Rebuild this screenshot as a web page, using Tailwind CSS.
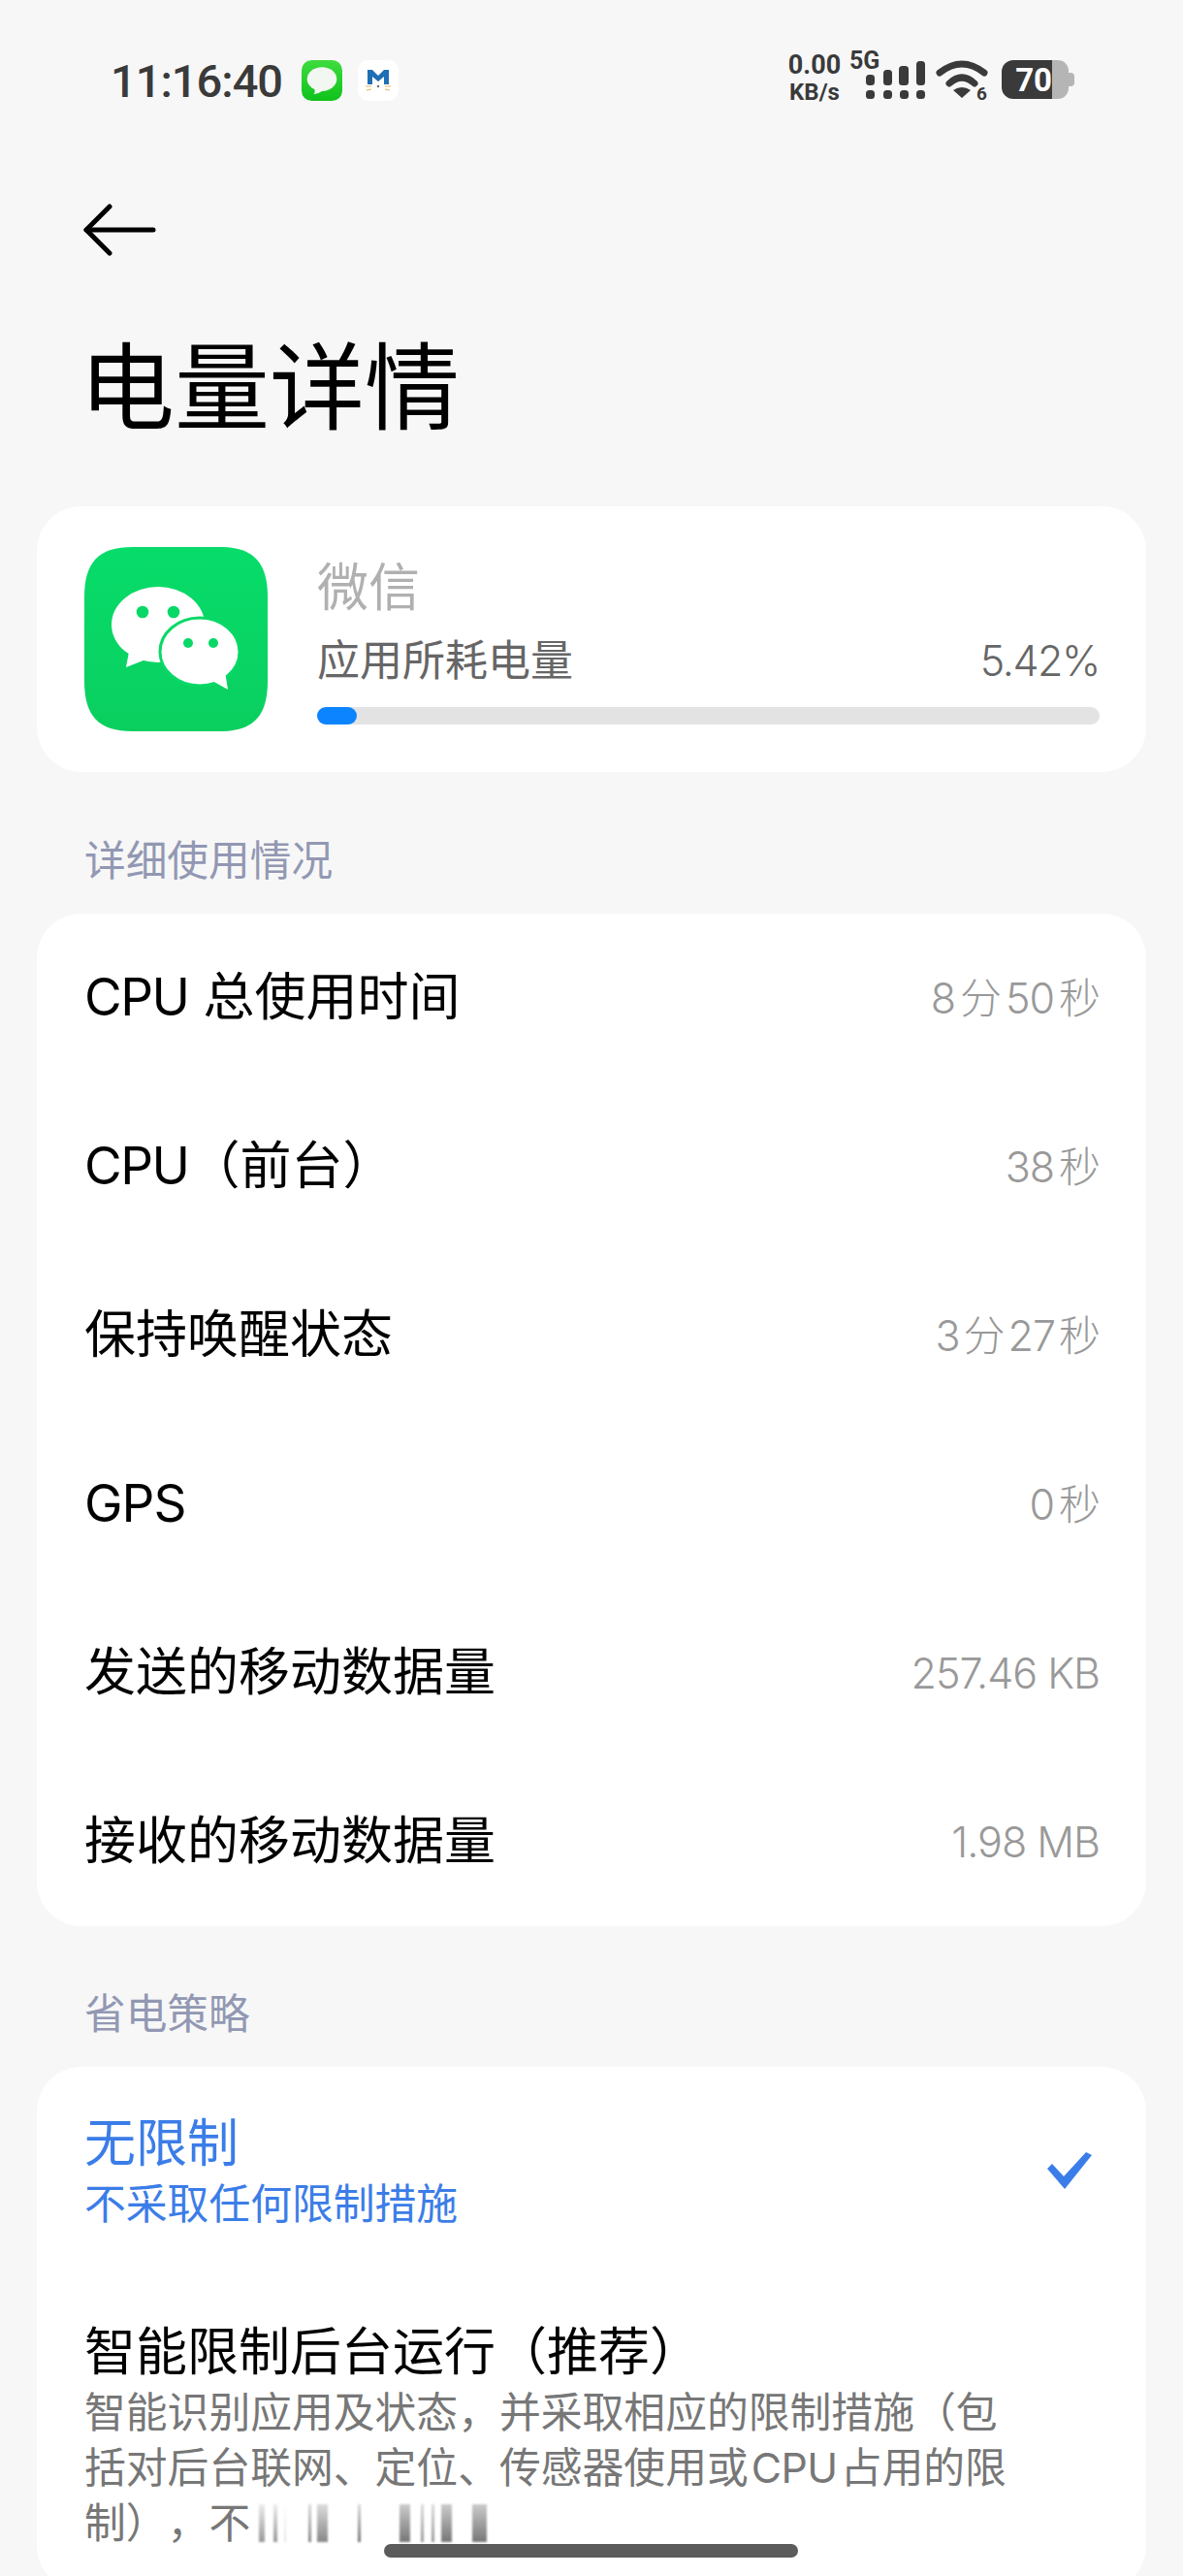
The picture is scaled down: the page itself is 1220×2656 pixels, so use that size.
<!DOCTYPE html>
<html lang="zh-CN">
<head>
    <meta charset="UTF-8">
    <title>电量详情</title>
    <script src="https://cdn.jsdelivr.net/npm/@tailwindcss/browser@4"></script>
</head>
<body class="bg-[#f7f7f7] font-['Inter','Noto_Sans_CJK_SC',sans-serif] text-black [text-spacing-trim:space-all]">
<div class="relative w-[1220px] h-[2656px] overflow-hidden">

    <!-- status bar -->
    <div class="h-[164px] pl-[114px] pr-[112px] flex items-start justify-between">
        <div class="flex items-center h-[42px] mt-[62px]">
            <span class="w-[197px] text-[47px] leading-none font-medium text-[#3a3a3a] font-['Roboto'] tracking-[-1px]">11:16:40</span>
            <svg width="42" height="42" viewBox="0 0 44 44">
                <defs><linearGradient id="msg" x1="0" y1="0" x2="0" y2="1"><stop offset="0" stop-color="#3fdc3f"/><stop offset="1" stop-color="#0fc21c"/></linearGradient></defs>
                <rect width="44" height="44" rx="11" fill="url(#msg)"/>
                <ellipse cx="22" cy="20.5" rx="16" ry="13" fill="#f2f7f1"/>
                <path d="M14 29 Q15 35 13 37 Q19 36 23 33 Z" fill="#f2f7f1"/>
            </svg>
            <div class="ml-[16px] w-[42px] h-[42px] rounded-[11px] bg-white flex items-center justify-center">
                <svg width="28" height="26" viewBox="0 0 28 26">
                    <path d="M3 2 L8 2 L14 8 L20 2 L25 2 L25 17 L20 17 L20 9 L14 14 L8 9 L8 17 L3 17 Z" fill="#1f6fb5"/>
                    <path d="M1 19h6M21 19h6M2 23l5-1M21 22l5 1" stroke="#e5b45a" stroke-width="1.2"/>
                    <circle cx="14" cy="19" r="1" fill="#333"/>
                </svg>
            </div>
        </div>
        <div class="flex items-start pt-[53px]">
            <div class="w-[54px] mt-[1px] flex flex-col items-center text-[#3a3a3a] font-bold font-['Roboto'] leading-none">
                <span class="text-[27px] leading-[26px]">0.00</span>
                <span class="text-[24px] leading-[24px] mt-[3px]">KB/s</span>
            </div>
            <svg class="ml-[9px] overflow-visible" width="79" height="50" viewBox="0 0 79 50">
                <text x="0" y="18" font-size="25" font-weight="700" fill="#3a3a3a" font-family="Roboto">5G</text>
                <g fill="#3a3a3a">
                    <rect x="17" y="24" width="9" height="11" rx="3.5"/><rect x="35" y="19" width="9" height="16" rx="3.5"/><rect x="51" y="15" width="10" height="20" rx="3.5"/><rect x="69" y="10" width="9" height="25" rx="3.5"/>
                    <rect x="17" y="40" width="9" height="9" rx="3.5"/><rect x="35" y="40" width="9" height="9" rx="3.5"/><rect x="52" y="40" width="9" height="9" rx="3.5"/><rect x="69" y="40" width="9" height="9" rx="3.5"/>
                </g>
            </svg>
            <svg class="mt-[10px] ml-[11px] overflow-visible" width="53" height="40" viewBox="0 0 53 40">
                <g fill="none" stroke="#3a3a3a" stroke-width="7" stroke-linecap="round">
                    <path d="M3 12 Q26 -6 49 12"/>
                    <path d="M13 23 Q26 11 39 23"/>
                </g>
                <path d="M17 30 Q26 24 35 30 L26 38 Z" fill="#3a3a3a"/>
                <text x="41" y="40" font-size="19" font-weight="700" fill="#3a3a3a" font-family="Roboto">6</text>
            </svg>
            <div class="mt-[9px] ml-[14px] flex items-center">
                <div class="w-[52px] h-[40px] rounded-l-[12px] bg-[#3a3a3a] flex items-center justify-end">
                    <span class="text-[33px] leading-none font-bold text-white font-['Roboto']">70</span>
                </div>
                <div class="w-[17px] h-[40px] rounded-r-[11px] bg-[#b5b5b5]"></div>
                <div class="w-[6px] h-[14px] rounded-r-[4px] bg-[#b5b5b5]"></div>
            </div>
        </div>
    </div>

    <!-- header -->
    <div class="mt-[46px] h-[54px] pl-[85px] flex items-center">
        <svg width="76" height="54" viewBox="0 0 76 54" fill="none" stroke="#000" stroke-width="5" stroke-linecap="round" stroke-linejoin="round">
            <path d="M4 27 H73"/>
            <path d="M28 3 L4 27 L28 51"/>
        </svg>
    </div>
    <h1 class="mt-[76px] pl-[82px] text-[98px] leading-[120px] font-normal">电量详情</h1>

    <!-- app card -->
    <div class="mt-[62px] mx-[38px] h-[274px] rounded-[46px] bg-white pl-[49px] pr-[48px] flex items-center">
        <svg class="shrink-0" width="189" height="190" viewBox="0 0 189 190">
            <defs><linearGradient id="wx" x1="0" y1="0" x2="0" y2="1"><stop offset="0" stop-color="#07dc6a"/><stop offset="1" stop-color="#0acf5f"/></linearGradient></defs>
            <path d="M50 0 H139 C175 0 189 16 189 52 V138 C189 174 175 190 139 190 H50 C14 190 0 174 0 138 V52 C0 16 14 0 50 0 Z" fill="url(#wx)"/>
            <ellipse cx="76" cy="80" rx="48" ry="39" fill="#fff"/>
            <path d="M46 108 L43 124 L66 115 Z" fill="#fff"/>
            <circle cx="60" cy="67" r="6.3" fill="#08d866"/>
            <circle cx="92" cy="67" r="6.3" fill="#08d866"/>
            <ellipse cx="119" cy="108" rx="41" ry="35" fill="#fff" stroke="#08d866" stroke-width="3"/>
            <path d="M132 138 L148 147 L145 128 Z" fill="#fff"/>
            <circle cx="107" cy="99" r="5" fill="#08d866"/>
            <circle cx="133" cy="99" r="5" fill="#08d866"/>
        </svg>
        <div class="ml-[51px] mt-[4px] flex-1">
            <div class="text-[53px] leading-[60px] text-[#b0b0b0]">微信</div>
            <div class="mt-[18px] flex items-center justify-between text-[#666] text-[44px] leading-[54px]">
                <span>应用所耗电量</span>
                <span class="font-light text-[43px] tracking-[-1.4px]">5.42%</span>
            </div>
            <div class="mt-[21px] h-[18px] rounded-full bg-[#e3e3e3]">
                <div class="h-full w-[41px] rounded-full bg-[#0d84ff]"></div>
            </div>
        </div>
    </div>

    <!-- usage details -->
    <div class="mt-[54px] pl-[87px] h-[92px] pt-[12px] text-[42.7px] leading-[52px] text-[#9298b3]">详细使用情况</div>
    <div class="mx-[38px] rounded-[46px] bg-white pl-[49px] pr-[48px]">
        <div class="h-[174px] flex items-center justify-between">
            <span class="text-[53px]"><span class="tracking-[-1.5px]">CPU</span> 总使用时间</span>
            <span class="text-[43px] font-light text-[#999] tracking-[-1px]">8<span class="mx-[5px]">分</span>50<span class="ml-[5px]">秒</span></span>
        </div>
        <div class="h-[174px] flex items-center justify-between">
            <span class="text-[53px]"><span class="tracking-[-1.5px]">CPU</span>（前台）</span>
            <span class="text-[43px] font-light text-[#999] tracking-[-1px]">38<span class="ml-[5px]">秒</span></span>
        </div>
        <div class="h-[174px] flex items-center justify-between">
            <span class="text-[53px]">保持唤醒状态</span>
            <span class="text-[43px] font-light text-[#999] tracking-[-1px]">3<span class="mx-[4px]">分</span>27<span class="ml-[4px]">秒</span></span>
        </div>
        <div class="h-[174px] flex items-center justify-between">
            <span class="text-[53px] tracking-[-1px]">GPS</span>
            <span class="text-[43px] font-light text-[#999] tracking-[-1px]">0<span class="ml-[5px]">秒</span></span>
        </div>
        <div class="h-[174px] flex items-center justify-between">
            <span class="text-[53px]">发送的移动数据量</span>
            <span class="text-[43px] font-light text-[#999] tracking-[-1px]">257.46 KB</span>
        </div>
        <div class="h-[174px] flex items-center justify-between">
            <span class="text-[53px]">接收的移动数据量</span>
            <span class="text-[43px] font-light text-[#999] tracking-[-1px]">1.98 MB</span>
        </div>
    </div>

    <!-- power saving -->
    <div class="mt-[63px] pl-[87px] h-[82px] text-[42.7px] leading-[56px] text-[#9298b3]">省电策略</div>
    <div class="mx-[38px] h-[540px] rounded-[46px] bg-white pl-[49px] pr-[48px]">
        <div class="flex items-center justify-between pt-[48px]">
            <div>
                <div class="text-[53px] leading-[62px] text-[#3b7de8]">无限制</div>
                <div class="mt-[2px] text-[42.8px] leading-[60px] text-[#3b7de8]">不采取任何限制措施</div>
            </div>
            <svg class="mr-[8px] mb-[6px]" width="46" height="38" viewBox="0 0 46 38" fill="#3b7de8">
                <path d="M0 17 L5 12 L17 25 L40 0 L46 3 L18 38 Z"/>
            </svg>
        </div>
        <div class="mt-[91px] text-[53px] leading-[62px]">智能限制后台运行（推荐）</div>
        <div class="mt-[3px] w-[1040px] text-[42.8px] leading-[57px] text-[#777]">
            <div>智能识别应用及状态，并采取相应的限制措施（包</div>
            <div>括对后台联网、定位、传感器使用或<span class="mx-[3px] tracking-[-0.5px]">CPU</span>占用的限</div>
            <div class="flex items-center">
                <span>制），不</span>
                <!-- half-loaded text behind the gesture bar -->
                <span class="flex h-[39px] blur-[1px]">
                    <i class="ml-[9px] w-[6px] bg-linear-to-b from-[#eee] to-[#999]"></i>
                    <i class="ml-[9px] w-[4px] bg-linear-to-b from-[#eee] to-[#999]"></i>
                    <i class="ml-[7px] w-[2px] bg-linear-to-b from-white to-[#e5e5e5]"></i>
                    <i class="ml-[23px] w-[3px] bg-linear-to-b from-[#ddd] to-[#888]"></i>
                    <i class="ml-[6px] w-[11px] bg-linear-to-b from-[#ddd] to-[#888]"></i>
                    <i class="ml-[31px] w-[3px] bg-linear-to-b from-[#ddd] to-[#777]"></i>
                    <i class="ml-[40px] w-[11px] bg-linear-to-b from-[#ccc] to-[#777]"></i>
                    <i class="ml-[11px] w-[3px] bg-linear-to-b from-[#ddd] to-[#999]"></i>
                    <i class="ml-[8px] w-[3px] bg-linear-to-b from-[#ddd] to-[#999]"></i>
                    <i class="ml-[7px] w-[11px] bg-linear-to-b from-[#ccc] to-[#777]"></i>
                    <i class="ml-[21px] w-[15px] bg-linear-to-b from-[#ccc] to-[#777]"></i>
                </span>
            </div>
        </div>
    </div>

    <!-- home indicator -->
    <div class="absolute left-[396px] top-[2623px] w-[427px] h-[14px] rounded-full bg-[#5c5c5c]"></div>
</div>
</body>
</html>
